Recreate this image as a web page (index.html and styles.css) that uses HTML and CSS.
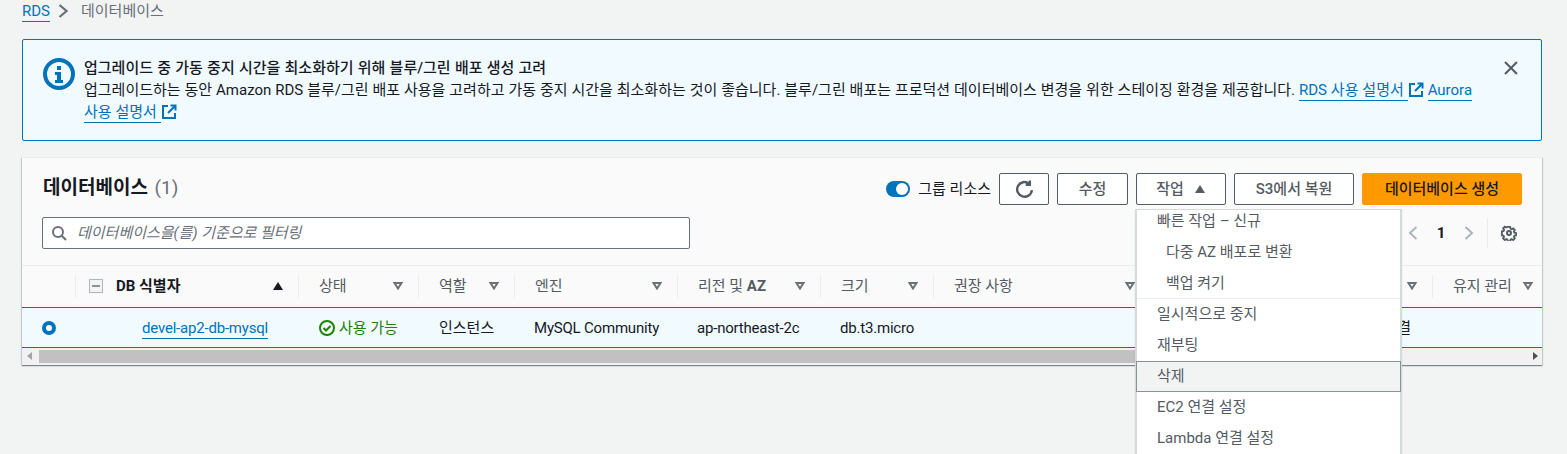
FILE: index.html
```html
<!DOCTYPE html>
<html lang="ko">
<head>
<meta charset="utf-8">
<title>데이터베이스</title>
<link rel="stylesheet" href="styles.css">
</head>
<body>
<nav class="crumbs">
  <a class="crumb-link" href="#">RDS</a>
  <svg class="crumb-sep" viewBox="0 0 10 14" width="10" height="14"><path d="M1.500 1l7 6-7 6" fill="none" stroke="#687078" stroke-width="2.200"/></svg>
  <span class="crumb-now">데이터베이스</span>
</nav>

<section class="flash">
  <svg class="flash-icon" viewBox="0 0 32 32" width="32" height="32">
    <circle cx="16" cy="16" r="14" fill="none" stroke="#0073bb" stroke-width="4"/>
    <rect x="14" y="8" width="4" height="4" fill="#0073bb"/>
    <path d="M12 14h6v8h2v3h-8v-3h2v-5h-2z" fill="#0073bb"/>
  </svg>
  <div class="flash-body">
    <div class="flash-title">업그레이드 중 가동 중지 시간을 최소화하기 위해 블루/그린 배포 생성 고려</div>
    <div class="flash-text">업그레이드하는 동안 Amazon RDS 블루/그린 배포 사용을 고려하고 가동 중지 시간을 최소화하는 것이 좋습니다. 블루/그린 배포는 프로덕션 데이터베이스 변경을 위한 스테이징 환경을 제공합니다. <a class="link" href="#">RDS 사용 설명서&nbsp;</a><svg class="ext" viewBox="0 0 16 16" width="16" height="16"><path d="M7 2H2v12h12V9M9.500 1.500h5v5M14 2L7 9" fill="none" stroke="#0073bb" stroke-width="2"/></svg> <a class="link" href="#">Aurora 사용 설명서&nbsp;</a><svg class="ext" viewBox="0 0 16 16" width="16" height="16"><path d="M7 2H2v12h12V9M9.500 1.500h5v5M14 2L7 9" fill="none" stroke="#0073bb" stroke-width="2"/></svg></div>
  </div>
  <svg class="flash-close" viewBox="0 0 16 16" width="16" height="16"><path d="M2 2l12 12M14 2L2 14" fill="none" stroke="#545b64" stroke-width="2"/></svg>
</section>

<section class="card">
  <header class="card-head">
    <div class="head-top">
      <h2 class="card-title">데이터베이스 <span class="count">(1)</span></h2>
      <div class="actions">
        <span class="toggle"><span class="knob"></span></span>
        <span class="toggle-label">그룹 리소스</span>
        <button class="btn btn-refresh" type="button"><svg viewBox="0 0 16 16" width="19" height="19"><path d="M14.200 8.500A6.200 6.200 0 1 1 11.800 3M12.500 0.500v3.500H9" fill="none" stroke="#545b64" stroke-width="2"/></svg></button>
        <button class="btn btn-edit" type="button">수정</button>
        <div class="menu-wrap">
          <button class="btn btn-actions" type="button">작업 <svg class="caret" viewBox="0 0 12 10" width="12" height="10"><path d="M6 1l5 8H1z" fill="#545b64"/></svg></button>
          <div class="menu">
            <div class="menu-group">빠른 작업 – 신규</div>
            <div class="menu-item nested">다중 AZ 배포로 변환</div>
            <div class="menu-item nested">백업 켜기</div>
            <div class="menu-rule"></div>
            <div class="menu-item">일시적으로 중지</div>
            <div class="menu-item">재부팅</div>
            <div class="menu-item hover">삭제</div>
            <div class="menu-item">EC2 연결 설정</div>
            <div class="menu-item">Lambda 연결 설정</div>
          </div>
        </div>
        <button class="btn btn-s3" type="button">S3에서 복원</button>
        <button class="btn btn-primary" type="button">데이터베이스 생성</button>
      </div>
    </div>
    <div class="head-bottom">
      <label class="search">
        <svg viewBox="0 0 16 16" width="16" height="16"><circle cx="7" cy="7" r="5" fill="none" stroke="#687078" stroke-width="2"/><path d="M10.500 10.500L15 15" stroke="#687078" stroke-width="2"/></svg>
        <input class="search-input" type="text" placeholder="데이터베이스을(를) 기준으로 필터링">
      </label>
      <div class="pager">
        <svg viewBox="0 0 12 16" width="12" height="16"><path d="M9.500 2L3 8l6.500 6" fill="none" stroke="#aab7b8" stroke-width="2"/></svg>
        <span class="page-no">1</span>
        <svg viewBox="0 0 12 16" width="12" height="16"><path d="M2.500 2L9 8l-6.500 6" fill="none" stroke="#aab7b8" stroke-width="2"/></svg>
        <span class="pager-sep"></span>
        <svg class="gear" viewBox="0 0 16 16" width="16" height="16"><path d="M6.600 1h2.800l.4 2 1.300.6 1.800-1 1.900 2-1.100 1.700.5 1.400 2 .4v2.700l-2 .4-.5 1.300 1.100 1.700-1.900 2-1.800-1.100-1.300.6-.4 2H6.600l-.4-2-1.300-.6-1.800 1.100-1.900-2 1.100-1.700-.5-1.300-2-.4V6.100l2-.4.500-1.400-1.100-1.700 1.900-2 1.800 1 1.300-.6z" transform="translate(1.100 1.100) scale(.86)" fill="none" stroke="#545b64" stroke-width="2.100"/><circle cx="8" cy="8" r="2" fill="none" stroke="#545b64" stroke-width="2"/></svg>
      </div>
    </div>
  </header>

  <table class="db-table">
    <colgroup>
      <col class="c-select"><col class="c-id"><col class="c-status"><col class="c-role"><col class="c-engine"><col class="c-region"><col class="c-size"><col class="c-rec"><col class="c-activity"><col class="c-maint">
    </colgroup>
    <thead>
      <tr>
        <th></th>
        <th><div class="th-in strong"><span class="collapse"><span class="collapse-bar"></span></span><span class="th-label">DB 식별자</span><svg class="sort-on" viewBox="0 0 10 8" width="10" height="8"><path d="M5 0l5 8H0z" fill="#16191f"/></svg></div></th>
        <th><div class="th-in"><span class="th-label">상태</span><svg class="sort" viewBox="0 0 10 8" width="10" height="8"><path d="M1.500 1h7L5 6.500z" fill="none" stroke="#687078" stroke-width="2"/></svg></div></th>
        <th><div class="th-in"><span class="th-label">역할</span><svg class="sort" viewBox="0 0 10 8" width="10" height="8"><path d="M1.500 1h7L5 6.500z" fill="none" stroke="#687078" stroke-width="2"/></svg></div></th>
        <th><div class="th-in"><span class="th-label">엔진</span><svg class="sort" viewBox="0 0 10 8" width="10" height="8"><path d="M1.500 1h7L5 6.500z" fill="none" stroke="#687078" stroke-width="2"/></svg></div></th>
        <th><div class="th-in"><span class="th-label">리전 및 <b>AZ</b></span><svg class="sort" viewBox="0 0 10 8" width="10" height="8"><path d="M1.500 1h7L5 6.500z" fill="none" stroke="#687078" stroke-width="2"/></svg></div></th>
        <th><div class="th-in"><span class="th-label">크기</span><svg class="sort" viewBox="0 0 10 8" width="10" height="8"><path d="M1.500 1h7L5 6.500z" fill="none" stroke="#687078" stroke-width="2"/></svg></div></th>
        <th><div class="th-in"><span class="th-label">권장 사항</span><svg class="sort" viewBox="0 0 10 8" width="10" height="8"><path d="M1.500 1h7L5 6.500z" fill="none" stroke="#687078" stroke-width="2"/></svg></div></th>
        <th><div class="th-in"><span class="th-label">현재 활동</span><svg class="sort" viewBox="0 0 10 8" width="10" height="8"><path d="M1.500 1h7L5 6.500z" fill="none" stroke="#687078" stroke-width="2"/></svg></div></th>
        <th><div class="th-in th-last"><span class="th-label">유지 관리</span><svg class="sort" viewBox="0 0 10 8" width="10" height="8"><path d="M1.500 1h7L5 6.500z" fill="none" stroke="#687078" stroke-width="2"/></svg></div></th>
      </tr>
    </thead>
    <tbody>
      <tr class="selected">
        <td><span class="radio"></span></td>
        <td class="cell-id latin"><a class="link" href="#">devel-ap2-db-mysql</a></td>
        <td class="cell-status"><svg viewBox="0 0 16 16" width="16" height="16"><circle cx="8" cy="8" r="7" fill="none" stroke="#1d8102" stroke-width="2"/><path d="M4.500 8l2.500 2.500L11.500 6" fill="none" stroke="#1d8102" stroke-width="2"/></svg><span>사용 가능</span></td>
        <td class="cell-role">인스턴스</td>
        <td class="latin">MySQL Community</td>
        <td class="latin">ap-northeast-2c</td>
        <td class="latin">db.t3.micro</td>
        <td></td>
        <td class="cell-right">0 연결</td>
        <td></td>
      </tr>
    </tbody>
  </table>

  <div class="hscroll">
    <svg viewBox="0 0 6 8" width="6" height="8"><path d="M5 0v8L0 4z" fill="#a3a3a3"/></svg>
    <div class="track"><div class="thumb"></div></div>
    <svg viewBox="0 0 6 8" width="6" height="8"><path d="M1 0v8l5-4z" fill="#505050"/></svg>
  </div>
</section>
</body>
</html>
```
FILE: styles.css
```css
* { box-sizing: border-box; }
html, body { height: 454px; overflow: hidden; }
body {
  margin: 0;
  padding: 0 25px 0 22px;
  background: #f2f3f3;
  color: #16191f;
  font-family: Roboto, "Noto Sans CJK KR", sans-serif;
  font-size: 15px;
  line-height: 22px;
}
.link { color: #0073bb; text-decoration: none; border-bottom: 1px solid #0073bb; padding-bottom: 1px; }

.crumbs { display: flex; align-items: center; height: 22px; margin-bottom: 17px; }
.crumb-link { color: #0073bb; text-decoration: none; border-bottom: 1px solid #0073bb; line-height: 20px; }
.crumb-sep { margin: 0 13px 0 8px; }
.crumb-now { color: #687078; }

.flash {
  display: flex;
  height: 102px;
  padding: 18px 22px 0 20px;
  background: #f1faff;
  border: 1px solid #0073bb;
  border-radius: 2px;
}
.flash-icon { flex: none; margin-right: 9px; }
.flash-body { width: 1400px; margin-top: -1px; word-spacing: .2px; }
.flash-title { font-weight: 500; word-spacing: .5px; }
.flash-close { flex: none; margin: 2px 0 0 21px; }
.ext { vertical-align: -3px; }

.card {
  margin-top: 16px;
  background: #fff;
  border-top: 1px solid #eaeded;
  box-shadow: 0 1px 1px 0 rgba(0, 28, 36, .3), 1px 1px 1px 0 rgba(0, 28, 36, .15), -1px 1px 1px 0 rgba(0, 28, 36, .15);
}
.card-head {
  height: 108px;
  padding: 15px 20px 0 20px;
  background: #fafafa;
  border-bottom: 1px solid #eaeded;
}
.head-top { display: flex; justify-content: space-between; align-items: center; height: 32px; }
.card-title { margin: -2px 0 0 1px; font-size: 19px; font-weight: 700; line-height: 28px; }
.count { margin-left: 2px; color: #687078; font-weight: 400; }
.actions { display: flex; align-items: center; }
.toggle {
  display: flex; align-items: center; justify-content: flex-end;
  width: 24px; height: 16px; padding-right: 2px;
  background: #0073bb; border-radius: 8px;
}
.knob { width: 12px; height: 12px; background: #fff; border-radius: 50%; }
.toggle-label { margin: 0 8px; color: #16191f; }
.btn {
  display: flex; align-items: center; justify-content: center;
  height: 32px; padding: 0;
  margin-right: 8px;
  background: #fff;
  border: 1px solid #545b64;
  border-radius: 2px;
  color: #545b64;
  font: 500 15px/22px Roboto, "Noto Sans CJK KR", sans-serif;
}
.btn-refresh { width: 50px; }
.btn-edit { width: 71px; }
.btn-actions { width: 90px; margin-right: 0; }
.caret { margin-left: 10px; }
.btn-s3 { width: 120px; }
.btn-primary { width: 160px; margin-right: 0; background: #f90; border-color: #f90; color: #16191f; }

.menu-wrap { position: relative; margin-right: 8px; }
.menu {
  position: absolute; top: 36px; left: -1px; z-index: 5;
  width: 267px;
  background: #fff;
  border: 1px solid #d5dbdb;
  border-width: 1px 2px 1px 2px;
  color: #545b64;
  box-shadow: 0 1px 1px rgba(0, 28, 36, .2);
}
.menu-group { height: 27px; padding: 0 20px; line-height: 22px; }
.menu-item { height: 31px; padding: 0 20px; line-height: 31px; }
.menu-item.nested { padding-left: 29px; }
.menu-rule { height: 1px; margin-top: -1px; background: #eaeded; }
.menu-item.hover {
  margin: 0 -1px;
  padding-left: 21px;
  background: #f2f3f3;
  outline: 1px solid #879596;
  outline-offset: -1px;
}

.head-bottom { display: flex; justify-content: space-between; align-items: center; margin-top: 12px; }
.search {
  display: flex; align-items: center; gap: 10px;
  width: 648px; height: 32px; padding-left: 8px;
  background: #fff;
  border: 1px solid #687078;
  border-radius: 2px;
}
.search-input {
  flex: 1; border: 0; padding: 0; background: none; outline: 0;
  font: italic 15px/22px Roboto, "Noto Sans CJK KR", sans-serif;
}
.search-input::placeholder { color: #687078; opacity: 1; }
.pager { display: flex; align-items: center; margin-right: 5px; }
.page-no { width: 44px; text-align: center; font-weight: 700; }
.pager-sep { width: 1px; height: 30px; margin: 0 13px 0 12px; background: #eaeded; }

.db-table { width: 1520px; table-layout: fixed; border-collapse: collapse; background: #fafafa; }
.c-select { width: 53px; } .c-id { width: 223px; } .c-status { width: 120px; } .c-role { width: 96px; }
.c-engine { width: 163px; } .c-region { width: 143px; } .c-size { width: 113px; } .c-rec { width: 217px; }
.c-activity { width: 282px; } .c-maint { width: 110px; }
.db-table th { height: 41px; padding: 0; font-weight: 400; color: #545b64; text-align: left; }
.th-in {
  display: flex; align-items: center; justify-content: space-between;
  height: 23px; padding: 0 15px 0 20px;
  border-left: 1px solid #eaeded;
}
.th-in.th-last { padding-right: 9px; }
.th-in.strong { justify-content: flex-start; padding-left: 13px; color: #16191f; font-weight: 700; }
.th-label b { font-weight: 700; }
.collapse {
  display: flex; align-items: center; justify-content: center;
  width: 14px; height: 14px; margin-right: 13px;
  border: 1px solid #aab7b8;
  background: #f2f3f3;
}
.collapse-bar { width: 8px; height: 2px; background: #879596; }
.sort-on { margin-left: auto; }
.selected td {
  height: 40px; padding: 1px 0 0 20px;
  background: #f1faff;
  border-top: 1px solid #0073bb;
  border-bottom: 1px solid #0073bb;
  white-space: nowrap;
}
.selected td.latin { letter-spacing: -.2px; }
.selected td.cell-role { padding-left: 21px; }
.selected td.cell-id { padding-left: 67px; }
.selected td.cell-right { text-align: right; padding-right: 21px; }
.selected td.cell-status { padding-left: 21px; color: #1d8102; }
.cell-status svg { vertical-align: -3px; margin-right: 4px; }
.radio {
  display: block; width: 14px; height: 14px;
  border: 4px solid #0073bb; border-radius: 50%; background: #fff;
}

.hscroll { display: flex; align-items: center; height: 17px; padding: 0 4px 0 5px; background: #f1f1f1; }
.track { flex: 1; height: 13px; margin: 0 6px; }
.thumb { width: 1200px; height: 13px; background: #c1c1c1; }
```
